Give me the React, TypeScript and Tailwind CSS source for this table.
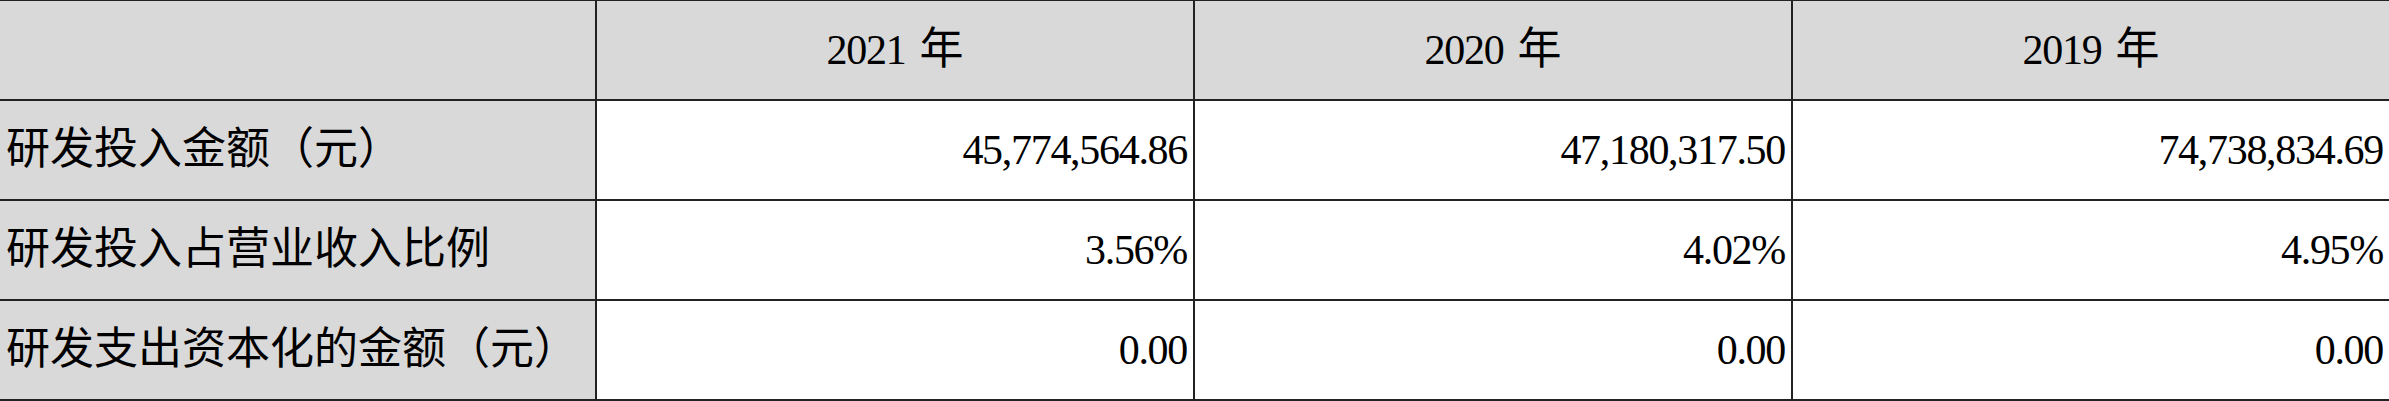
const years = ["2021", "2020", "2019"];

const rows = [
  { label: "研发投入金额（元）", values: ["45,774,564.86", "47,180,317.50", "74,738,834.69"] },
  { label: "研发投入占营业收入比例", values: ["3.56%", "4.02%", "4.95%"] },
  { label: "研发支出资本化的金额（元）", values: ["0.00", "0.00", "0.00"] },
];

export default function App() {
  return (
    <div className="w-[2389px] h-[401px] bg-white [font-family:'Liberation_Serif','Noto_Sans_CJK_SC',serif] text-black leading-none">
      <div className="grid grid-cols-[595px_596px_596px_596px] grid-rows-[98px_98px_98px_98px] gap-[2px] bg-[#222222] pt-[1px] pb-[2px]">
        <div className="bg-[#d9d9d9]" />
        {years.map((y) => (
          <div key={y} className="bg-[#d9d9d9] flex items-center justify-center">
            <span className="text-[42px] tracking-[-1.2px]">{y}</span>
            <span className="text-[44px] ml-[14px]">年</span>
          </div>
        ))}
        {rows.map((row) => (
          <>
            <div key={row.label} className="bg-[#d9d9d9] flex items-center pl-[6px] text-[44px]">
              {row.label}
            </div>
            {row.values.map((v, i) => (
              <div
                key={row.label + i}
                className="bg-white flex items-center justify-end pr-[6px] text-[42px] tracking-[-1.3px]"
              >
                {v}
              </div>
            ))}
          </>
        ))}
      </div>
    </div>
  );
}
